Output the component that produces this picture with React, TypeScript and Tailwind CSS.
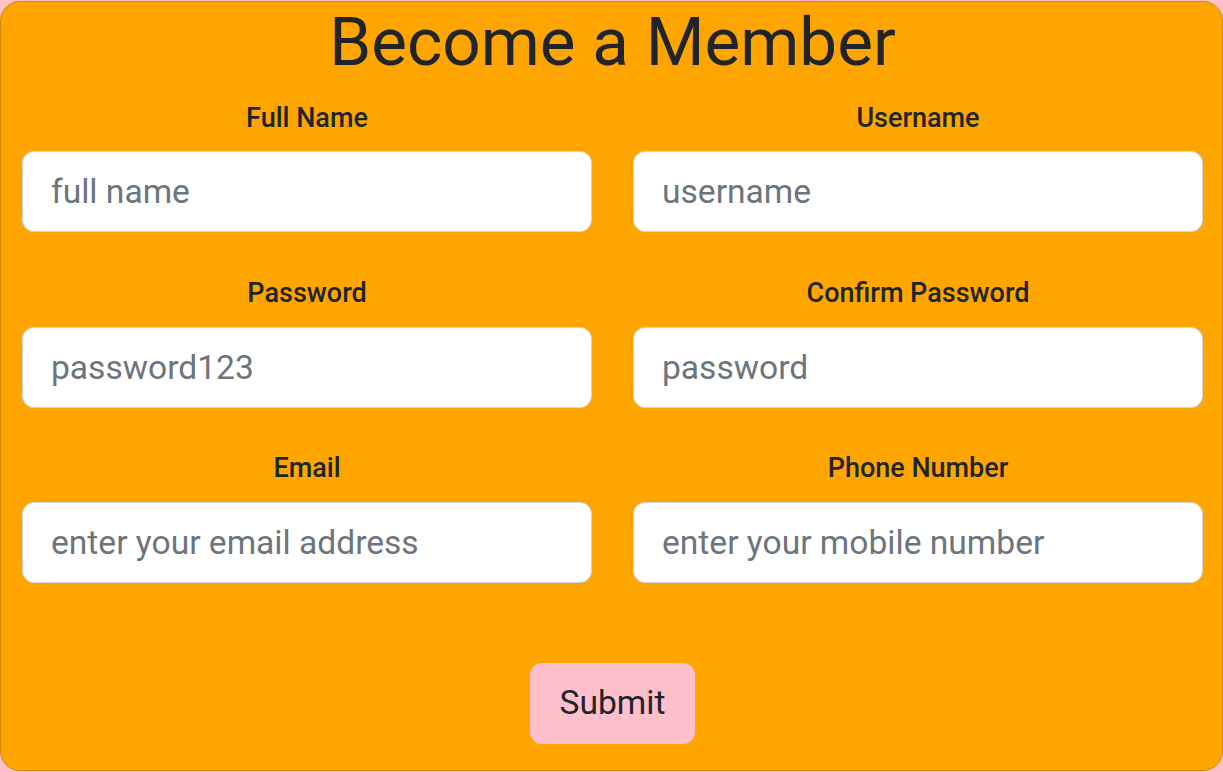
import React from "react";

const fields = [
  { label: "Full Name", placeholder: "full name" },
  { label: "Username", placeholder: "username" },
  { label: "Password", placeholder: "password123" },
  { label: "Confirm Password", placeholder: "password" },
  { label: "Email", placeholder: "enter your email address" },
  { label: "Phone Number", placeholder: "enter your mobile number" },
];

export default function App() {
  return (
    <div
      className="min-h-screen bg-[#ffc0cb] pt-px text-[#212529]"
      style={{ fontFamily: "Roboto, 'Noto Sans', sans-serif" }}
    >
      <div className="h-[770px] rounded-[20px] border border-[#d28800] bg-[#ffa500] pl-[21px] pr-[19px]">
        <h1 className="text-center text-[67.4px] leading-[1.2] font-normal">
          Become a Member
        </h1>

        <form className="mt-[19px]" onSubmit={(e) => e.preventDefault()}>
          <div className="grid grid-cols-2 gap-x-[41px] gap-y-[44.6px]">
            {fields.map((f) => (
              <div key={f.label} className="flex flex-col">
                <label className="text-center text-[27px] leading-[1.2] font-medium">
                  {f.label}
                </label>
                <input
                  type="text"
                  placeholder={f.placeholder}
                  className="mt-[17.2px] h-[81px] w-full rounded-[12px] border border-[#ced4da] bg-white pl-[28px] text-[33.6px] text-[#212529] outline-none placeholder:text-[#6c757d]"
                />
              </div>
            ))}
          </div>

          <div className="mt-[80px] flex justify-center">
            <button
              type="submit"
              className="h-[81px] rounded-[12px] bg-[#ffc0cb] px-[30px] text-[33.6px] text-[#212529]"
            >
              Submit
            </button>
          </div>
        </form>
      </div>
    </div>
  );
}
